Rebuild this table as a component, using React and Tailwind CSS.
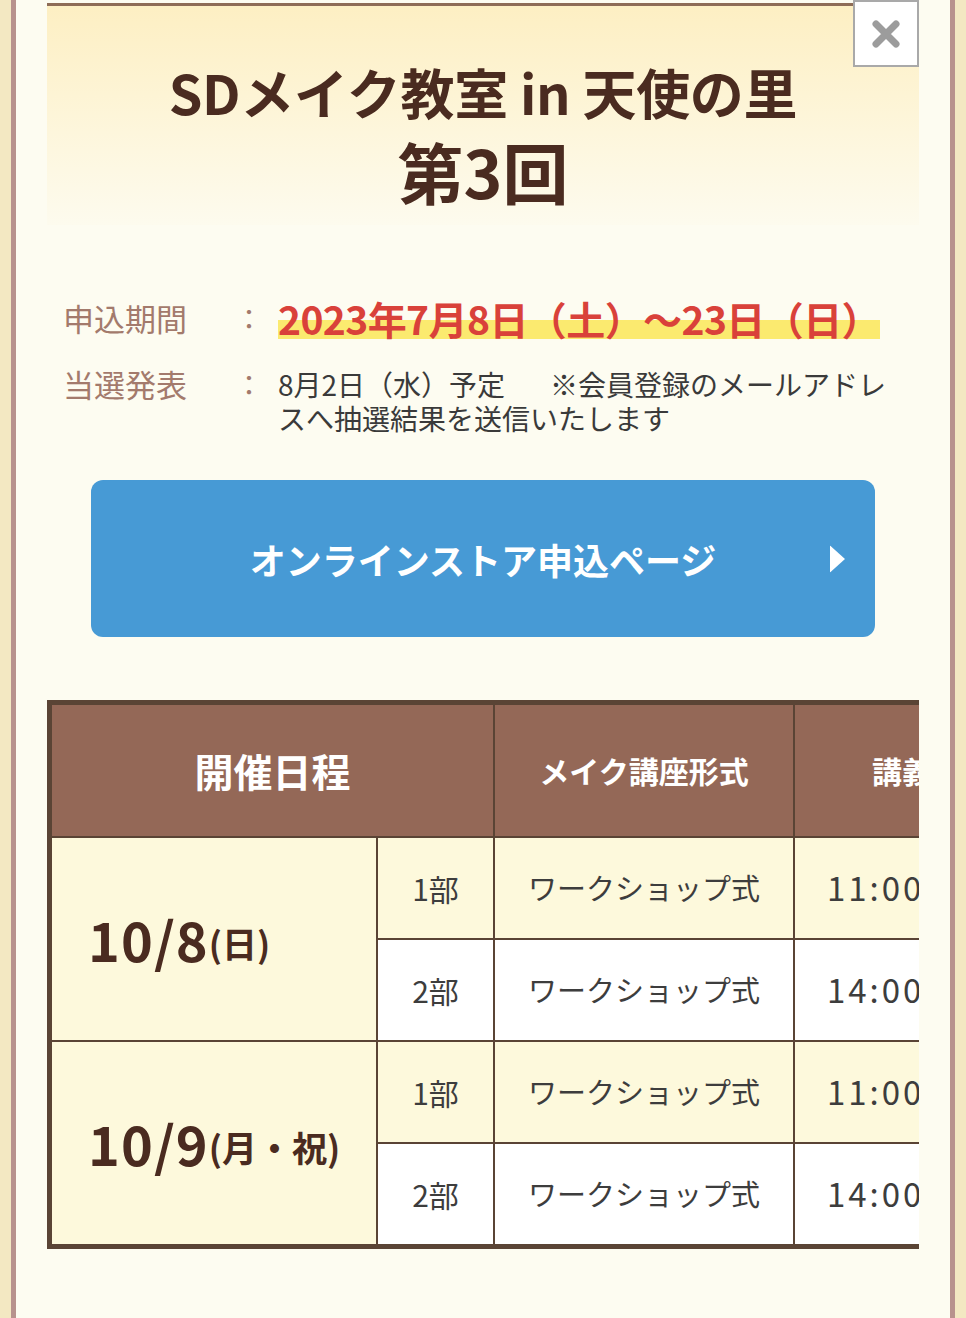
export default function App() {
  const rows = [
    { date: "10/8", day: "(日)", parts: [["1部", "11:00〜12:30"], ["2部", "14:00〜15:30"]] },
    { date: "10/9", day: "(月・祝)", parts: [["1部", "11:00〜12:30"], ["2部", "14:00〜15:30"]] },
  ];
  return (
    <div className="w-[966px] min-h-[1318px] bg-[#f3e8c2] px-[11px] flex font-['Noto_Sans_CJK_JP','Noto_Sans',sans-serif]">
      <div className="flex-1 min-w-0 border-x-[5px] border-[#b8928d] bg-[#fdfcf1] px-[31px] pb-[60px]">
        {/* header */}
        <div className="relative mt-[3px] h-[222px] border-t-[3px] border-[#8e6c56] bg-gradient-to-b from-[#fdefc3] to-[#fdfbee] flex flex-col items-center pt-[55px]">
          <h1 className="text-[54px] leading-[62px] font-bold text-[#4a2b20] tracking-[-0.005em]">SDメイク教室 in 天使の里</h1>
          <p className="mt-[9px] text-[66px] leading-[76px] font-bold text-[#4a2b20]">第3回</p>
          <button className="absolute top-[-6px] right-0 w-[66px] h-[67px] bg-white border-2 border-[#a9a9a9] flex items-center justify-center">
            <svg width="32" height="32" viewBox="0 0 32 32">
              <path d="M6 6 L26 26 M26 6 L6 26" stroke="#9c9c9c" strokeWidth="7" strokeLinecap="round" />
            </svg>
          </button>
        </div>

        {/* info */}
        <div className="mt-[68px] pl-[16px] flex flex-col gap-[24px]">
          <div className="flex items-center">
            <span className="w-[172px] shrink-0 text-[31px] leading-[50px] text-[#a37a6c]">申込期間</span>
            <span className="w-[43px] shrink-0 text-[28px] leading-[50px] text-[#a37a6c]">：</span>
            <span className="text-[39px] leading-[46px] font-bold text-[#d9413a] tracking-[-0.015em] bg-[linear-gradient(transparent_55%,#fbea6f_55%,#fbea6f_96%,transparent_96%)]">
              2023年7月8日（土）〜23日（日）
            </span>
          </div>
          <div className="flex items-start">
            <span className="w-[172px] shrink-0 text-[31px] leading-[34px] text-[#a37a6c]">当選発表</span>
            <span className="w-[43px] shrink-0 text-[28px] leading-[34px] text-[#a37a6c]">：</span>
            <p className="w-[620px] text-[28px] leading-[34px] text-[#3a3a3a]">
              8月2日（水）予定<span className="inline-block w-[45px]"></span>※会員登録のメールアドレスへ抽選結果を送信いたします
            </p>
          </div>
        </div>

        {/* button */}
        <a className="mt-[45px] mx-[44px] h-[157px] rounded-[12px] bg-[#479ad5] relative flex items-center justify-center">
          <span className="text-[36px] font-bold text-white">オンラインストア申込ページ</span>
          <svg className="absolute right-[30px] top-1/2 -translate-y-1/2" width="15" height="27" viewBox="0 0 15 27">
            <path d="M0 0 L15 13.5 L0 27 Z" fill="#ffffff" />
          </svg>
        </a>

        {/* table */}
        <div className="mt-[63px] overflow-hidden">
          <div className="w-max grid grid-cols-[324px_115px_298px_274px] grid-rows-[131px_100px_100px_100px_100px] gap-[2px] bg-[#5a4435] border-y-[5px] border-l-[5px] border-[#5a4435]">
            <div className="col-span-2 bg-[#946857] flex items-center justify-center text-[39px] font-bold text-white">開催日程</div>
            <div className="bg-[#946857] flex items-center justify-center text-[30px] font-bold text-white">メイク講座形式</div>
            <div className="bg-[#946857] flex items-center justify-center text-[30px] font-bold text-white">講義時間</div>
            {rows.map((r) => (
              <div key={r.date} className="contents">
                <div className="row-span-2 bg-[#fdf9dc] flex items-center pl-[36px] text-[#4a2b20] font-bold">
                  <span className="text-[54px] leading-none tracking-[0.02em]">{r.date}</span>
                  <span className="text-[35px] leading-none mt-[6px]">{r.day}</span>
                </div>
                {r.parts.map(([p, t], i) => (
                  <div key={p} className="contents">
                    <div className={`${i === 0 ? "bg-[#fdf9dc]" : "bg-white"} flex items-center justify-center text-[30px] text-[#3d3d3d]`}>{p}</div>
                    <div className={`${i === 0 ? "bg-[#fdf9dc]" : "bg-white"} flex items-center justify-center text-[29px] text-[#3d3d3d]`}>ワークショップ式</div>
                    <div className={`${i === 0 ? "bg-[#fdf9dc]" : "bg-white"} flex items-center justify-start pl-[32px] text-[33px] tracking-[0.09em] text-[#3d3d3d]`}>{t}</div>
                  </div>
                ))}
              </div>
            ))}
          </div>
        </div>
      </div>
    </div>
  );
}
